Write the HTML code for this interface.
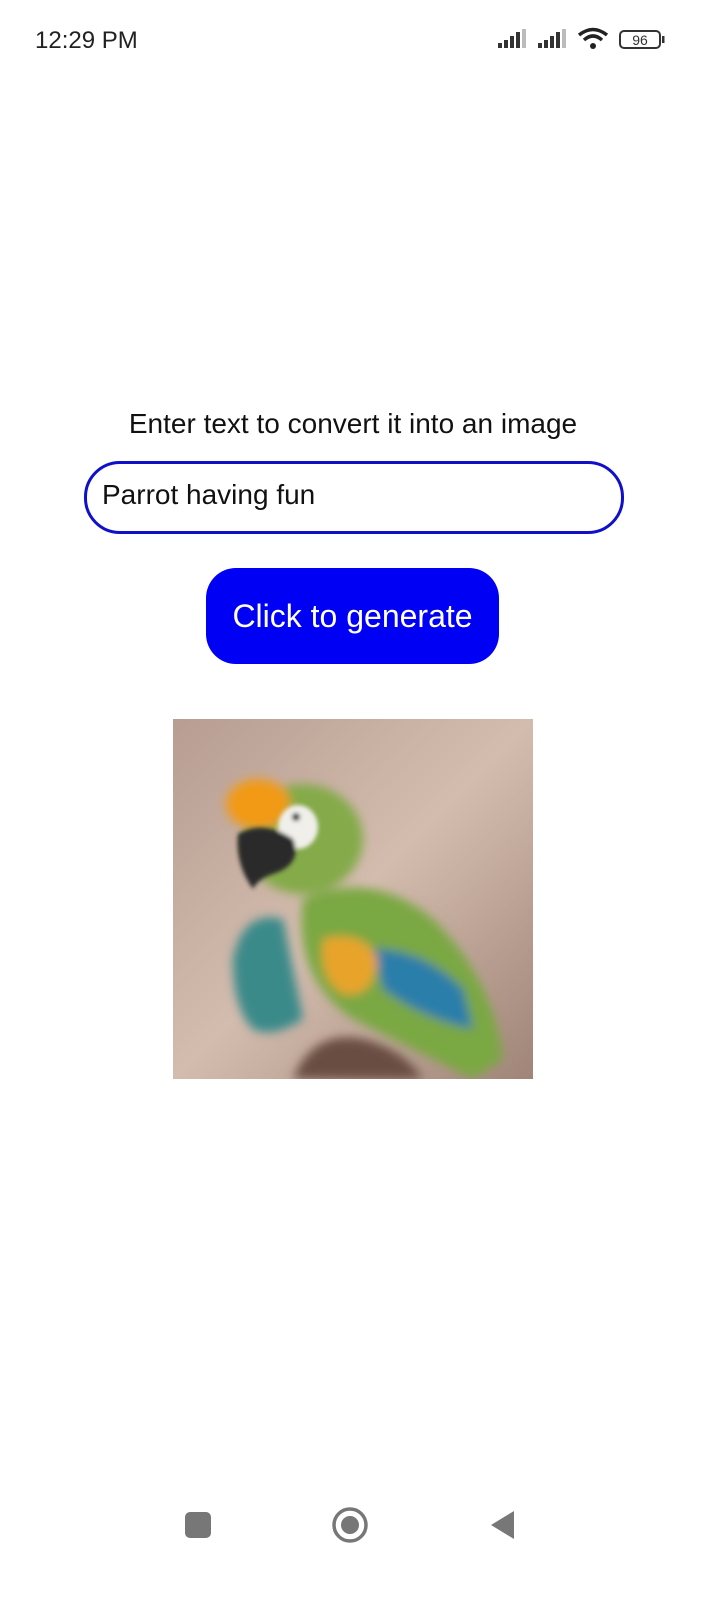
<!DOCTYPE html>
<html><head><meta charset="utf-8"><style>
body{margin:0;width:720px;height:1600px;background:#fff;position:relative;font-family:"Liberation Sans",Roboto,sans-serif;overflow:hidden}
.abs{position:absolute}
</style></head><body>
<div class="abs" style="left:35px;top:27px;font-size:24px;color:#222">12:29 PM</div>
<svg class="abs" style="left:495px;top:26px" width="175" height="28" viewBox="0 0 175 28">
<g fill="#333"><rect x="3" y="17" width="4" height="5"/><rect x="9" y="14" width="4" height="8"/><rect x="15" y="10" width="4" height="12"/><rect x="21" y="6" width="4" height="16"/></g><rect x="27" y="3" width="4" height="19" fill="#bbb"/>
<g fill="#333"><rect x="43" y="17" width="4" height="5"/><rect x="49" y="14" width="4" height="8"/><rect x="55" y="10" width="4" height="12"/><rect x="61" y="6" width="4" height="16"/></g><rect x="67" y="3" width="4" height="19" fill="#bbb"/>
<path d="M84 9 Q98 -2 112 9" stroke="#222" stroke-width="3.5" fill="none"/><path d="M89 14 Q98 6 107 14" stroke="#222" stroke-width="3.5" fill="none"/><circle cx="98" cy="20" r="3" fill="#222"/>
<rect x="125" y="5" width="40" height="17" rx="4" fill="#fff" stroke="#333" stroke-width="2"/><rect x="167" y="10" width="2.5" height="7" fill="#333"/>
<text x="145" y="19" font-size="14" text-anchor="middle" fill="#333" font-family="Liberation Sans">96</text></svg>
<div class="abs" style="left:0;width:706px;top:408px;text-align:center;font-size:28px;color:#111">Enter text to convert it into an image</div>
<div class="abs" style="left:84px;top:461px;width:534px;height:67px;border:3px solid #1010c8;border-radius:36px;box-sizing:content-box"></div>
<div class="abs" style="left:102px;top:479px;font-size:28px;color:#111">Parrot having fun</div>
<div class="abs" style="left:206px;top:568px;width:293px;height:96px;background:#0000f5;border-radius:30px;color:#fff;font-size:32px;text-align:center;line-height:96px">Click to generate</div>
<svg class="abs" style="left:173px;top:719px" width="360" height="360" viewBox="0 0 360 360">
<defs><filter id="b"><feGaussianBlur stdDeviation="5"/></filter><filter id="b2"><feGaussianBlur stdDeviation="2"/></filter>
<linearGradient id="bg" x1="0" y1="0" x2="1" y2="1"><stop offset="0" stop-color="#b79d92"/><stop offset=".5" stop-color="#d3bcae"/><stop offset="1" stop-color="#a08478"/></linearGradient></defs>
<rect width="360" height="360" fill="url(#bg)"/>
<g filter="url(#b)">
<path d="M60 240 Q70 190 110 200 L130 300 Q100 320 80 310 Q60 290 60 240Z" fill="#3a8a8a"/>
<path d="M130 180 Q200 150 260 200 Q320 260 330 340 L300 360 Q240 330 180 300 Q120 260 130 180Z" fill="#7aa842"/>
<path d="M200 230 Q250 230 290 270 L300 310 Q250 300 210 270Z" fill="#2a7eaa"/>
<path d="M150 220 Q190 210 205 240 Q200 280 170 275 Q145 260 150 220Z" fill="#e8a42a"/>
<ellipse cx="130" cy="120" rx="60" ry="55" fill="#84aa48"/>
<ellipse cx="85" cy="85" rx="32" ry="25" fill="#f29a18"/>
<path d="M120 360 Q140 310 190 320 Q230 330 250 360Z" fill="#6a4e42"/>
</g>
<g filter="url(#b2)">
<ellipse cx="125" cy="108" rx="20" ry="22" fill="#f0efea"/>
<path d="M65 115 Q90 100 120 120 Q130 145 100 155 Q85 160 80 170 Q62 145 65 115Z" fill="#2a2a2a"/>
<circle cx="123" cy="98" r="4" fill="#222"/>
</g>
</svg>
<svg class="abs" style="left:180px;top:1505px" width="350" height="40" viewBox="0 0 350 40">
<rect x="5" y="7" width="26" height="26" rx="5" fill="#777"/>
<circle cx="170" cy="20" r="16" fill="none" stroke="#777" stroke-width="3.5"/><circle cx="170" cy="20" r="9" fill="#777"/>
<path d="M334 6 L334 34 L311 20Z" fill="#777"/>
</svg>
</body></html>
